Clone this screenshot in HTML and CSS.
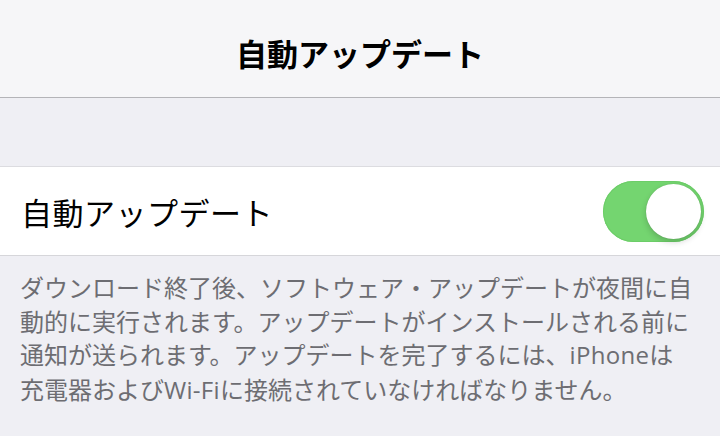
FILE: index.html
```html
<!DOCTYPE html>
<html lang="ja">
<head>
  <meta charset="UTF-8">
  <meta name="viewport" content="width=device-width, initial-scale=1.0">
  <title>自動アップデート</title>
  <link rel="stylesheet" href="styles.css">
</head>
<body>
  <!-- Navigation Bar -->
  <header class="nav-bar">
    <h1>自動アップデート</h1>
  </header>

  <div class="group-gap"></div>

  <!-- Toggle Cell -->
  <div class="cell">
    <span class="cell-label">自動アップデート</span>
    <label class="switch">
      <input type="checkbox" checked>
      <span class="track"><span class="knob"></span></span>
    </label>
  </div>

  <!-- Footer Note -->
  <p class="footer-note">
    ダウンロード終了後、ソフトウェア・アップデートが夜間に自<br>
    動的に実行されます。アップデートがインストールされる前に<br>
    通知が送られます。アップデートを完了するには、<span class="latin">iPhone</span>は<br>
    充電器および<span class="latin">Wi-Fi</span>に接続されていなければなりません。
  </p>
</body>
</html>
```

FILE: styles.css
```css
/* General Styles */
body {
  margin: 0;
  padding: 0;
  height: 100vh;
  background-color: #efeff4;
  font-family: "Noto Sans CJK JP", "Noto Sans", sans-serif;
  color: #000;
  overflow: hidden;
}

/* Navigation Bar */
.nav-bar {
  height: 97px;
  background-color: #f6f6f8;
  border-bottom: 1px solid #b4b4b8;
  display: flex;
  justify-content: center;
  align-items: center;
}

.nav-bar h1 {
  margin: 0;
  font-size: 31px;
  font-weight: 700;
  padding-top: 8px;
}

.group-gap {
  height: 68px;
  border-bottom: 1px solid #dcdce0;
}

/* Cell */
.cell {
  height: 88px;
  background-color: #fff;
  border-bottom: 1px solid #d6d6da;
  display: flex;
  justify-content: space-between;
  align-items: center;
  padding: 0 16px 0 21px;
}

.cell-label {
  font-size: 31px;
  font-weight: 400;
  letter-spacing: 0.5px;
}

/* Switch */
.switch input {
  display: none;
}

.switch .track {
  width: 101px;
  height: 61px;
  border-radius: 31px;
  background-color: #74d570;
  display: flex;
  justify-content: flex-end;
  align-items: center;
  padding: 0 3px;
  box-sizing: border-box;
  box-shadow: inset 0 0 0 1px #6ccd68;
}

.switch .knob {
  width: 55px;
  height: 55px;
  border-radius: 50%;
  background-color: #fff;
  box-shadow: 0 3px 6px rgba(0, 0, 0, 0.18), 0 0 1px rgba(0, 0, 0, 0.2);
}

/* Footer Note */
.footer-note {
  margin: 0;
  padding: 14px 20px 0;
  font-size: 24px;
  line-height: 33.5px;
  color: #6d6d72;
  white-space: nowrap;
}

.footer-note .latin {
  font-family: "Open Sans", "Noto Sans", sans-serif;
  letter-spacing: 0.3px;
}
```
